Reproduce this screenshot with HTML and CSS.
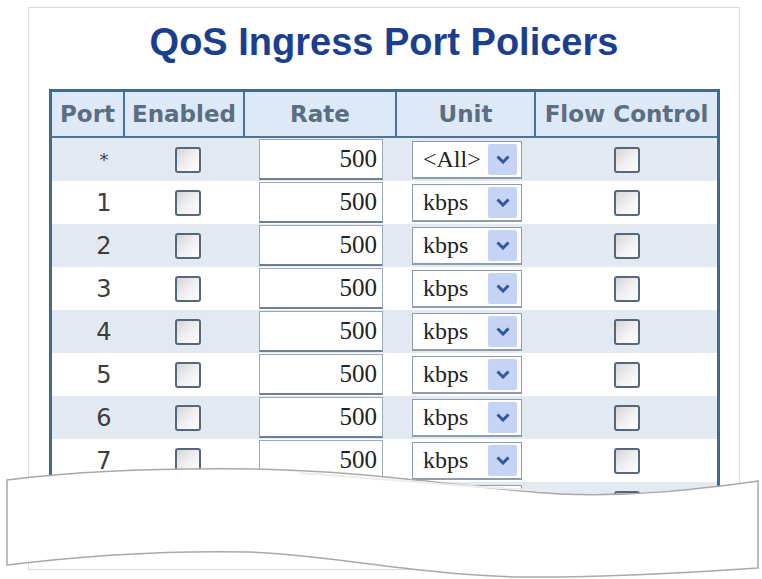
FILE: index.html
```html
<!DOCTYPE html>
<html>
<head>
<meta charset="utf-8">
<title>QoS Ingress Port Policers</title>
<link rel="stylesheet" href="styles.css">
</head>
<body>
<div class="frame">
  <h1 class="title">QoS Ingress Port Policers</h1>
  <table class="grid">
    <thead>
      <tr>
        <th class="c-port">Port</th>
        <th class="c-en">Enabled</th>
        <th class="c-rate">Rate</th>
        <th class="c-unit">Unit</th>
        <th class="c-flow">Flow Control</th>
      </tr>
    </thead>
    <tbody>
      <tr class="shade">
        <td class="port star">*</td>
        <td class="en"><input type="checkbox" class="cb"></td>
        <td class="rate"><input type="text" class="num" value="500"></td>
        <td class="unit"><div class="sel"><span class="sel-text">&lt;All&gt;</span><span class="sel-btn"><svg width="14" height="9" viewBox="0 0 14 9"><polyline points="1.5,1.5 7,7 12.5,1.5" fill="none" stroke="#34569a" stroke-width="3"/></svg></span></div></td>
        <td class="flow"><input type="checkbox" class="cb"></td>
      </tr>
      <tr>
        <td class="port">1</td>
        <td class="en"><input type="checkbox" class="cb"></td>
        <td class="rate"><input type="text" class="num" value="500"></td>
        <td class="unit"><div class="sel"><span class="sel-text">kbps</span><span class="sel-btn"><svg width="14" height="9" viewBox="0 0 14 9"><polyline points="1.5,1.5 7,7 12.5,1.5" fill="none" stroke="#34569a" stroke-width="3"/></svg></span></div></td>
        <td class="flow"><input type="checkbox" class="cb"></td>
      </tr>
      <tr class="shade">
        <td class="port">2</td>
        <td class="en"><input type="checkbox" class="cb"></td>
        <td class="rate"><input type="text" class="num" value="500"></td>
        <td class="unit"><div class="sel"><span class="sel-text">kbps</span><span class="sel-btn"><svg width="14" height="9" viewBox="0 0 14 9"><polyline points="1.5,1.5 7,7 12.5,1.5" fill="none" stroke="#34569a" stroke-width="3"/></svg></span></div></td>
        <td class="flow"><input type="checkbox" class="cb"></td>
      </tr>
      <tr>
        <td class="port">3</td>
        <td class="en"><input type="checkbox" class="cb"></td>
        <td class="rate"><input type="text" class="num" value="500"></td>
        <td class="unit"><div class="sel"><span class="sel-text">kbps</span><span class="sel-btn"><svg width="14" height="9" viewBox="0 0 14 9"><polyline points="1.5,1.5 7,7 12.5,1.5" fill="none" stroke="#34569a" stroke-width="3"/></svg></span></div></td>
        <td class="flow"><input type="checkbox" class="cb"></td>
      </tr>
      <tr class="shade">
        <td class="port">4</td>
        <td class="en"><input type="checkbox" class="cb"></td>
        <td class="rate"><input type="text" class="num" value="500"></td>
        <td class="unit"><div class="sel"><span class="sel-text">kbps</span><span class="sel-btn"><svg width="14" height="9" viewBox="0 0 14 9"><polyline points="1.5,1.5 7,7 12.5,1.5" fill="none" stroke="#34569a" stroke-width="3"/></svg></span></div></td>
        <td class="flow"><input type="checkbox" class="cb"></td>
      </tr>
      <tr>
        <td class="port">5</td>
        <td class="en"><input type="checkbox" class="cb"></td>
        <td class="rate"><input type="text" class="num" value="500"></td>
        <td class="unit"><div class="sel"><span class="sel-text">kbps</span><span class="sel-btn"><svg width="14" height="9" viewBox="0 0 14 9"><polyline points="1.5,1.5 7,7 12.5,1.5" fill="none" stroke="#34569a" stroke-width="3"/></svg></span></div></td>
        <td class="flow"><input type="checkbox" class="cb"></td>
      </tr>
      <tr class="shade">
        <td class="port">6</td>
        <td class="en"><input type="checkbox" class="cb"></td>
        <td class="rate"><input type="text" class="num" value="500"></td>
        <td class="unit"><div class="sel"><span class="sel-text">kbps</span><span class="sel-btn"><svg width="14" height="9" viewBox="0 0 14 9"><polyline points="1.5,1.5 7,7 12.5,1.5" fill="none" stroke="#34569a" stroke-width="3"/></svg></span></div></td>
        <td class="flow"><input type="checkbox" class="cb"></td>
      </tr>
      <tr>
        <td class="port">7</td>
        <td class="en"><input type="checkbox" class="cb"></td>
        <td class="rate"><input type="text" class="num" value="500"></td>
        <td class="unit"><div class="sel"><span class="sel-text">kbps</span><span class="sel-btn"><svg width="14" height="9" viewBox="0 0 14 9"><polyline points="1.5,1.5 7,7 12.5,1.5" fill="none" stroke="#34569a" stroke-width="3"/></svg></span></div></td>
        <td class="flow"><input type="checkbox" class="cb"></td>
      </tr>
      <tr class="shade">
        <td class="port">8</td>
        <td class="en"><input type="checkbox" class="cb"></td>
        <td class="rate"><input type="text" class="num" value="500"></td>
        <td class="unit"><div class="sel"><span class="sel-text">kbps</span><span class="sel-btn"><svg width="14" height="9" viewBox="0 0 14 9"><polyline points="1.5,1.5 7,7 12.5,1.5" fill="none" stroke="#34569a" stroke-width="3"/></svg></span></div></td>
        <td class="flow"><input type="checkbox" class="cb"></td>
      </tr>
    </tbody>
  </table>
</div>
<svg class="tear" width="762" height="579" viewBox="0 0 762 579">
  <path d="M7,480 C80,471 160,468 250,469 C380,471 480,490 560,494 C640,497 700,489 758,481 L758,568 C700,572 600,578 520,577 C420,575 330,555 250,552 C160,550 80,556 7,565 Z" fill="#ffffff" stroke="#a9a9a9" stroke-width="1.5"/>
  <path d="M300,473 C400,480 480,489 560,491" fill="none" stroke="#ececec" stroke-width="2"/>
</svg>
</body>
</html>
```

FILE: styles.css
```css
html, body {
  margin: 0;
  padding: 0;
  background: #ffffff;
}

body {
  width: 762px;
  height: 579px;
  overflow: hidden;
  position: relative;
}

.frame {
  box-sizing: border-box;
  margin: 7px 0 0 28px;
  width: 712px;
  height: 563px;
  border: 1px solid #dadada;
  overflow: hidden;
}

.title {
  margin: 12px 0 0 0;
  font-family: "Liberation Sans", Arial, sans-serif;
  font-weight: bold;
  font-size: 38px;
  line-height: 44px;
  color: #1b3f8e;
  text-align: center;
}

.grid {
  margin: 25px 0 0 20px;
  box-sizing: border-box;
  width: 671px;
  table-layout: fixed;
  border-collapse: separate;
  border-spacing: 0;
  border: 3px solid #3f6a93;
  border-bottom: none;
}

.grid th {
  padding: 0;
  height: 44px;
  background: #dde9f6;
  border-bottom: 2px solid #4d7397;
  border-right: 2px solid #4d7397;
  font-family: "DejaVu Sans", Verdana, sans-serif;
  font-weight: bold;
  font-size: 23px;
  color: #5b6d80;
  text-align: center;
  white-space: nowrap;
}

.grid th.c-flow {
  border-right: none;
}

.c-port { width: 71px; }
.c-en { width: 118px; }
.c-rate { width: 150px; }
.c-unit { width: 137px; }
.c-flow { width: 181px; }

.grid tbody tr {
  height: 43px;
}

.grid tbody tr.shade td {
  background: #e3e9f0;
}

.grid td {
  padding: 0;
  vertical-align: middle;
  background: #ffffff;
}

.grid td.port {
  padding-left: 31px;
  text-align: center;
  font-family: "DejaVu Sans", Verdana, sans-serif;
  font-size: 24px;
  color: #3c3c3c;
}

.grid td.star {
  font-size: 18px;
  color: #444;
}

.cb {
  -webkit-appearance: none;
  appearance: none;
  display: block;
  box-sizing: border-box;
  width: 26px;
  height: 26px;
  margin: 0 auto;
  border: 2px solid #56677b;
  border-radius: 3px;
  background: linear-gradient(135deg, #d6d6d6 0%, #f1f1f1 55%, #ffffff 100%);
}

.grid td.en .cb {
  position: relative;
  left: 3px;
}

.grid td.rate {
  padding: 0 12px 0 14px;
}

.num {
  display: block;
  box-sizing: border-box;
  width: 124px;
  height: 41px;
  margin: 0;
  padding: 0 5px 0 4px;
  border: 1px solid #9aa9ba;
  border-bottom: 2px solid #6f8094;
  background: #ffffff;
  font-family: "Liberation Serif", "Times New Roman", serif;
  font-size: 25px;
  color: #222;
  text-align: right;
  outline: none;
}

.grid td.unit {
  padding-left: 15px;
}

.sel {
  box-sizing: border-box;
  width: 110px;
  height: 38px;
  display: flex;
  align-items: center;
  justify-content: space-between;
  padding: 0 4px 0 10px;
  border: 1px solid #8f9cab;
  border-bottom-width: 2px;
  background: #ffffff;
}

.sel-text {
  font-family: "Liberation Serif", "Times New Roman", serif;
  font-size: 24px;
  color: #222;
  line-height: 1;
}

.sel-btn {
  box-sizing: border-box;
  width: 29px;
  height: 31px;
  background: #c5d3f4;
  border-radius: 2px;
  display: flex;
  align-items: center;
  justify-content: center;
}

.tear {
  position: absolute;
  left: 0;
  top: 0;
  pointer-events: none;
}
```
